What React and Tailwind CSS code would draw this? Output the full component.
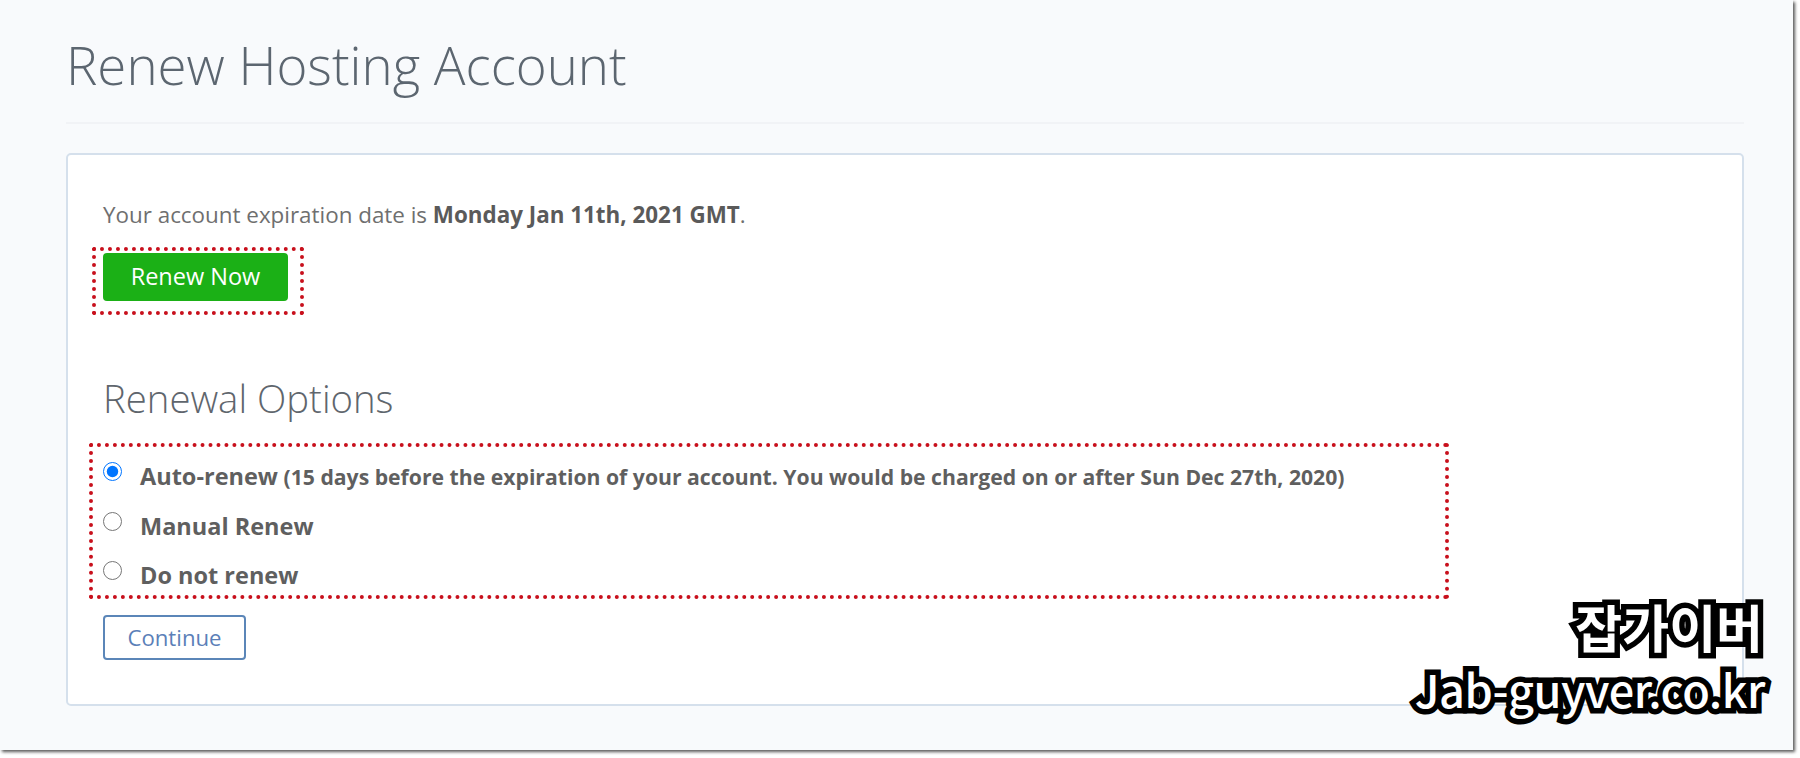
export default function App() {
  const font = "font-['Open_Sans',sans-serif]";
  const rows = [
    { checked: true, label: "Auto-renew", extra: " (15 days before the expiration of your account. You would be charged on or after Sun Dec 27th, 2020)" },
    { checked: false, label: "Manual Renew" },
    { checked: false, label: "Do not renew" },
  ];
  return (
    <div className={`relative h-[758px] w-[1800px] overflow-hidden bg-white ${font}`}>
      <div className="h-[750px] w-[1793px] bg-[#f8fafc] pl-[66px] pr-[49px] pt-[32px] shadow-[2px_2px_3px_rgba(0,0,0,0.65)]">
        <h1 className="h-[92px] border-b-2 border-[#f1f3f6] text-[52.8px] font-light leading-[66px] text-[#5c6670]">
          Renew Hosting Account
        </h1>
        <div className="mt-[29px] h-[553px] rounded-[5px] border-2 border-[#d5e0ec] bg-white pl-[35px] pt-[45px]">
          <p className="text-[22.4px] leading-[30px] text-[#6f6f6f]">
            Your account expiration date is <b className="font-bold text-[#5a5a5a]">Monday Jan 11th, 2021 GMT</b>.
          </p>
          <div className="-ml-[11px] mt-[17px] h-[68px] w-[212px] rounded-[2px] border-[4px] border-dotted border-[#c8101c] pl-[7px] pt-[2px]">
            <button className="h-[48px] w-[185px] rounded-[4px] bg-[#1bb016] text-[23.5px] text-white">Renew Now</button>
          </div>
          <h2 className="mt-[58px] text-[38.3px] font-light leading-[50px] text-[#5f666d]">Renewal Options</h2>
          <div className="-ml-[14px] mt-[20px] h-[156px] w-[1360px] rounded-[2px] border-[4px] border-dotted border-[#c8101c] pl-[10px] pt-[15px]">
            {rows.map((r) => (
              <label key={r.label} className="flex h-[49.5px] items-start">
                <input type="radio" name="renew" defaultChecked={r.checked} className="m-0 h-[19px] w-[19px] accent-[#0075ff]" />
                <span className="ml-[18px] mt-[-4px] text-[23.5px] font-bold leading-[36px] text-[#5f5f5f] whitespace-nowrap">
                  {r.label}
                  {r.extra && <span className="text-[21.2px]">{r.extra}</span>}
                </span>
              </label>
            ))}
          </div>
          <button className="mt-[16px] h-[45px] w-[143px] rounded-[4px] border-2 border-[#5b86b8] bg-white text-[22.2px] text-[#5b80b8]">
            Continue
          </button>
        </div>
      </div>
      <div className="absolute right-[37px] top-[591px] text-[51px] font-bold leading-[70px] text-white [font-family:'Noto_Sans_CJK_KR',sans-serif] [paint-order:stroke_fill] [-webkit-text-stroke:11px_black]">
        잡가이버
      </div>
      <div className="absolute right-[35px] top-[657px] text-[45px] font-medium leading-[64px] tracking-[-0.5px] text-white [font-family:'Noto_Sans_CJK_KR',sans-serif] [paint-order:stroke_fill] [-webkit-text-stroke:11px_black]">
        Jab-guyver.co.kr
      </div>
    </div>
  );
}
